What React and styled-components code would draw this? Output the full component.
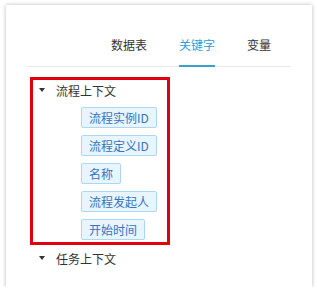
import React from "react";
import styled, { createGlobalStyle } from "styled-components";

const GlobalStyle = createGlobalStyle`
    body {
        margin: 0;
        background: #ffffff;
        font-family: "Noto Sans CJK SC", "Liberation Sans", sans-serif;
    }
`;

const Card = styled.div`
    box-sizing: border-box;
    margin: 5px 0 0 6px;
    width: 306px;
    height: 282px;
    padding: 30px 21px 0 24px;
    background: #fff;
    box-shadow: 0 0 4px rgba(0, 0, 0, 0.28);
`;

const TabList = styled.div`
    display: flex;
    justify-content: flex-end;
    padding-right: 4px;
    margin-left: -3px;
    border-bottom: 1px solid #e9e9e9;
`;

const Tab = styled.div`
    padding: 0 0 10px;
    margin: 0 16px -1px;
    font-size: 12px;
    line-height: 20px;
    color: ${(p) => (p.$active ? "#2a9fd6" : "#333")};
    border-bottom: 2px solid ${(p) => (p.$active ? "#3aa0cc" : "transparent")};

    &:last-child {
        margin-right: 16px;
    }
`;

const Tree = styled.div`
    margin-top: 13px;
    padding-left: 3px;
`;

const Highlight = styled.div`
    width: 134px;
    height: 162px;
    outline: 3px solid #e1000f;
    box-sizing: border-box;
`;

const NodeHead = styled.div`
    display: flex;
    align-items: center;
    height: 20px;
    padding-left: 6px;
    margin-top: ${(p) => p.$top || 0}px;
    font-size: 12px;
    color: #333;
`;

const Caret = styled.span`
    width: 0;
    height: 0;
    margin-right: 11px;
    border-left: 3.5px solid transparent;
    border-right: 3.5px solid transparent;
    border-top: 4px solid #333;
`;

const TagList = styled.div`
    display: flex;
    flex-direction: column;
    align-items: flex-start;
    gap: 7px;
    margin-top: 7px;
    padding-left: 48px;
`;

const Tag = styled.span`
    box-sizing: border-box;
    height: 21px;
    padding: 0 7px;
    border: 1px solid #acd7f2;
    border-radius: 2px;
    background: #e8f5fd;
    color: #3474c1;
    font-size: 12px;
    line-height: 19px;
`;

const tabs = ["数据表", "关键字", "变量"];
const fields = ["流程实例ID", "流程定义ID", "名称", "流程发起人", "开始时间"];

export default function App() {
    return (
        <>
            <GlobalStyle />
            <Card>
                <TabList>
                    {tabs.map((t) => (
                        <Tab key={t} $active={t === "关键字"}>
                            {t}
                        </Tab>
                    ))}
                </TabList>
                <Tree>
                    <Highlight>
                        <NodeHead>
                            <Caret />
                            流程上下文
                        </NodeHead>
                        <TagList>
                            {fields.map((f) => (
                                <Tag key={f}>{f}</Tag>
                            ))}
                        </TagList>
                    </Highlight>
                    <NodeHead $top={6}>
                        <Caret />
                        任务上下文
                    </NodeHead>
                </Tree>
            </Card>
        </>
    );
}
